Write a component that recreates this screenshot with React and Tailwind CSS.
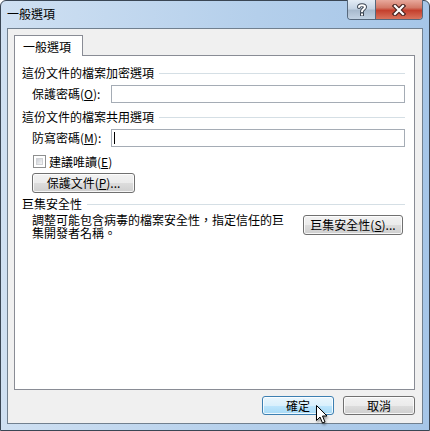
import React from 'react';

function GroupHeader({ text }) {
  return (
    <div className="flex items-center h-[14px] leading-[14px]">
      <span className="whitespace-nowrap">{text}</span>
      <div className="ml-[5px] flex-1 h-px bg-[#d5dfe5]"></div>
    </div>
  );
}

function Btn({ children, className = '', hot = false }) {
  const skin = hot
    ? 'border-[#3c7fb1] bg-[linear-gradient(#eaf6fd_0%,#d9f0fc_50%,#bee6fd_50%,#a7d9f5_100%)]'
    : 'border-[#707070] bg-[linear-gradient(#f2f2f2_0%,#ebebeb_50%,#dddddd_50%,#cfcfcf_100%)]';
  return (
    <div className={`flex items-center justify-center rounded-[3px] border shadow-[inset_0_0_0_1px_rgba(255,255,255,0.8)] leading-[14px] whitespace-nowrap ${skin} ${className}`}>
      {children}
    </div>
  );
}

function PasswordRow({ label, mnemonic, withCaret }) {
  return (
    <div className="flex items-center mt-[5px] pl-[10px]">
      <span className="w-[79px] whitespace-nowrap leading-[14px]">
        {label}(<u>{mnemonic}</u>):
      </span>
      <div className="relative flex-1 h-[18px] border border-[#a5acb5] bg-white">
        {withCaret && <div className="absolute left-[2px] top-[2px] w-px h-[12px] bg-black"></div>}
      </div>
    </div>
  );
}

export default function App() {
  return (
    <div className="w-[430px] h-[431px] font-['Noto_Sans_CJK_TC','Liberation_Sans',sans-serif] text-[12px] text-black">
      <div className="relative flex flex-col w-[430px] h-[431px] rounded-t-[6px] border border-[#3a4654] bg-[linear-gradient(to_right,#cfe0f2,#b4cfeb_60%,#a6c6e8)]">
        {/* title bar */}
        <div className="flex h-[27px]">
          <span className="ml-[6px] self-center leading-[16px] -mt-[2px]">一般選項</span>
          <div className="ml-auto mr-[6px] -mt-px flex h-[20px] rounded-b-[4px] border border-t-0 border-[#56687c] overflow-hidden">
            <div className="w-[28px] h-full flex items-center justify-center border-r border-[#56687c] bg-[linear-gradient(#e3ecf5_0%,#c5d4e4_45%,#a8bacd_55%,#c2d2e3_100%)]">
              <svg width="10" height="13" viewBox="0 0 10 13">
                <path d="M2 4 C2 1.5 8 1.5 8 4 C8 6 5 6 5 8.5" fill="none" stroke="#3b4552" strokeWidth="4" strokeLinecap="round" />
                <path d="M2 4 C2 1.5 8 1.5 8 4 C8 6 5 6 5 8.5" fill="none" stroke="#fff" strokeWidth="2" strokeLinecap="round" />
                <rect x="3.5" y="10" width="3" height="3" fill="#fff" stroke="#3b4552" strokeWidth="1" />
              </svg>
            </div>
            <div className="w-[46px] h-full flex items-center justify-center bg-[linear-gradient(#e8a99c_0%,#d37a68_40%,#c4402d_55%,#d9735c_100%)]">
              <svg width="14" height="12" viewBox="0 0 14 12">
                <path d="M3 2 L11 10 M11 2 L3 10" stroke="#4a2420" strokeWidth="4.5" strokeLinecap="square" />
                <path d="M3 2 L11 10 M11 2 L3 10" stroke="#fff" strokeWidth="2.2" strokeLinecap="square" />
              </svg>
            </div>
          </div>
        </div>

        {/* client area */}
        <div className="mx-[6px] h-[396px] border border-[#71808f] bg-[#f0f0f0] flex flex-col pt-[6px] pl-[6px]">
          <div className="relative z-10 -mb-px w-[69px] h-[21px] border border-b-0 border-[#898c95] bg-white pl-[8px] leading-[19px] pt-px">
            一般選項
          </div>
          <div className="w-[401px] h-[335px] border border-[#898c95] bg-white flex flex-col pl-[7px] pr-[9px]">
            <div className="mt-[10px]"><GroupHeader text="這份文件的檔案加密選項" /></div>
            <PasswordRow label="保護密碼" mnemonic="O" />

            <div className="mt-[7px]"><GroupHeader text="這份文件的檔案共用選項" /></div>
            <PasswordRow label="防寫密碼" mnemonic="M" withCaret />

            <div className="mt-[8px] pl-[11px] flex items-center h-[13px]">
              <div className="w-[13px] h-[13px] border border-[#8e8f8f] bg-white p-[2px]">
                <div className="w-full h-full bg-[linear-gradient(135deg,#cbcfd5,#f6f6f6)] border border-[#d0d2d5]"></div>
              </div>
              <span className="ml-[3px] leading-[14px]">建議唯讀(<u>E</u>)</span>
            </div>

            <div className="mt-[5px] pl-[10px]">
              <Btn className="w-[103px] h-[20px]">保護文件(<u>P</u>)...</Btn>
            </div>

            <div className="mt-[4px]"><GroupHeader text="巨集安全性" /></div>

            <div className="mt-[2px] flex items-start pl-[10px]">
              <div className="leading-[13px] whitespace-nowrap">
                <div>調整可能包含病毒的檔案安全性，指定信任的巨</div>
                <div>集開發者名稱。</div>
              </div>
              <Btn className="ml-auto mr-[2px] mt-[2px] w-[100px] h-[20px]">巨集安全性(<u>S</u>)...</Btn>
            </div>
          </div>

          <div className="mt-[6px] flex gap-[9px] pl-[248px]">
            <Btn hot className="w-[72px] h-[19px]">確定</Btn>
            <Btn className="w-[72px] h-[19px]">取消</Btn>
          </div>
        </div>

        {/* mouse pointer */}
        <svg className="absolute left-[314px] top-[403px] drop-shadow-[1px_2px_1px_rgba(0,0,0,0.35)]" width="13" height="21" viewBox="0 0 13 21">
          <path d="M1.5 1.5 L1.5 16.5 L5 13 L7.5 19 L10 18 L7.5 12 L12 12 Z" fill="#fff" stroke="#000" strokeWidth="1" strokeLinejoin="miter" />
        </svg>
      </div>
    </div>
  );
}
